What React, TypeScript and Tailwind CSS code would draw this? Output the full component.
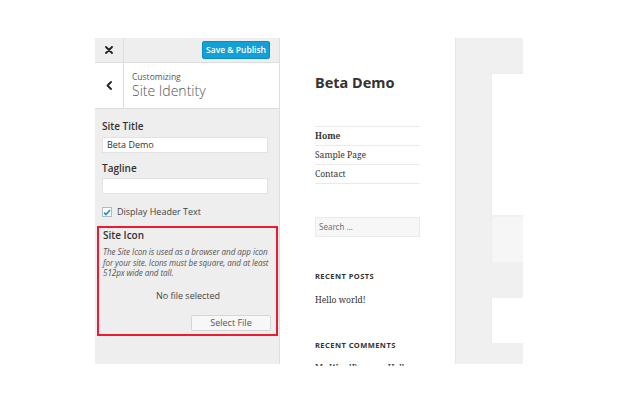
const sans = "font-['Open_Sans','Noto_Sans',sans-serif]";
const serif = "font-['Noto_Serif','DejaVu_Serif',serif]";

const CloseIcon = () => (
  <svg width="8" height="8" viewBox="0 0 8 8">
    <path d="M1 1 L7 7 M7 1 L1 7" stroke="#222" strokeWidth="1.8" strokeLinecap="round" />
  </svg>
);

const BackIcon = () => (
  <svg width="6" height="9" viewBox="0 0 6 9">
    <path d="M5 1 L1.5 4.5 L5 8" stroke="#222" strokeWidth="1.8" fill="none" strokeLinecap="round" strokeLinejoin="round" />
  </svg>
);

const Customizer = () => (
  <div className={`w-[185px] h-[326px] shrink-0 bg-[#eeeeee] border-r border-[#dedede] flex flex-col ${sans} text-[#444]`}>
    <div className="h-[25px] shrink-0 flex border-b border-[#dddddd]">
      <div className="w-[29px] border-r border-[#dddddd] flex items-center justify-center">
        <CloseIcon />
      </div>
      <div className="flex-1 flex items-center justify-end pr-[9px]">
        <button className="w-[68px] h-[18px] rounded-[2px] bg-[#13a0d8] border border-[#0a8cc4] text-white text-[8.5px] font-semibold leading-none">
          Save &amp; Publish
        </button>
      </div>
    </div>
    <div className="h-[46px] shrink-0 flex bg-white border-b border-[#dddddd]">
      <div className="w-[29px] border-r border-[#dddddd] flex items-center justify-center">
        <BackIcon />
      </div>
      <div className="flex flex-col justify-center pl-[8px] pb-[1px] text-[#555]">
        <span className="text-[8.5px] leading-[11px]">Customizing</span>
        <span className="text-[14px] leading-[18px] font-light">Site Identity</span>
      </div>
    </div>
    <div className="pl-[7px] pt-[11px] flex flex-col">
      <label className="text-[10px] leading-[13px] font-semibold text-[#333]">Site Title</label>
      <div className="mt-[4px] w-[166px] h-[16px] bg-white border border-[#e2e2e2] px-[4px] flex items-center text-[9px] text-[#333]">
        Beta Demo
      </div>
      <label className="mt-[9px] text-[10px] leading-[13px] font-semibold text-[#333]">Tagline</label>
      <div className="mt-[3px] w-[166px] h-[16px] bg-white border border-[#e2e2e2]" />
      <div className="mt-[12px] flex items-center gap-[5px]">
        <div className="w-[10px] h-[10px] bg-white border border-[#b4b9be] flex items-center justify-center">
          <svg width="8" height="7" viewBox="0 0 8 7">
            <path d="M1 3.6 L3 5.6 L7 1" stroke="#1e8cbe" strokeWidth="1.6" fill="none" />
          </svg>
        </div>
        <span className="text-[9px] leading-[12px] text-[#444]">Display Header Text</span>
      </div>
      <div className="mt-[8px] -ml-[5px] w-[181px] h-[110px] border-2 border-[#ea1c33] pl-[4px] pr-[3px] flex flex-col">
        <span className="mt-[1px] text-[10px] leading-[13px] font-semibold text-[#333]">Site Icon</span>
        <p className="mt-[5px] text-[8.1px] leading-[10.5px] italic text-[#555] tracking-[-0.01em]">
          The Site Icon is used as a browser and app icon for your site. Icons must be square, and at least 512px wide and tall.
        </p>
        <span className="mt-[10px] text-center text-[9px] leading-[13px] text-[#444]">No file selected</span>
        <div className="mt-[13px] flex justify-end pr-[2px]">
          <button className="w-[80px] h-[16px] bg-[#f7f7f7] border border-[#d6d6d6] rounded-[2px] text-[9px] text-[#555] leading-none">
            Select File
          </button>
        </div>
      </div>
    </div>
  </div>
);

const NavItem = ({ label, bold }: { label: string; bold?: boolean }) => (
  <div className={`h-[19px] border-b border-[#eaeaea] flex items-center text-[8.5px] text-[#333] ${bold ? "font-bold" : ""}`}>
    {label}
  </div>
);

const Preview = () => (
  <div className="w-[175px] h-[328px] shrink-0 bg-white overflow-hidden pl-[35px] pr-[35px] flex flex-col">
    <h1 className="mt-[35px] shrink-0 font-['Noto_Sans','Open_Sans',sans-serif] font-bold text-[14.5px] leading-[18px] text-[#333]">Beta Demo</h1>
    <nav className={`mt-[35px] shrink-0 border-t border-[#eaeaea] ${serif}`}>
      <NavItem label="Home" bold />
      <NavItem label="Sample Page" />
      <NavItem label="Contact" />
    </nav>
    <div className="mt-[33px] shrink-0 h-[20px] bg-[#f7f7f7] border border-[#eaeaea] flex items-center px-[3px] font-['Noto_Sans',sans-serif] text-[8px] text-[#707070]">
      Search …
    </div>
    <h2 className="mt-[34px] shrink-0 font-['Noto_Sans',sans-serif] font-bold text-[7.5px] leading-[10px] tracking-[0.06em] text-[#333]">RECENT POSTS</h2>
    <span className={`mt-[13px] shrink-0 ${serif} text-[8.5px] leading-[12px] text-[#333]`}>Hello world!</span>
    <h2 className="mt-[34px] shrink-0 font-['Noto_Sans',sans-serif] font-bold text-[7.5px] leading-[10px] tracking-[0.06em] text-[#333]">RECENT COMMENTS</h2>
    <span className={`mt-[12px] shrink-0 ${serif} text-[8.5px] leading-[12px] text-[#333]`}>Mr WordPress on Hello world!</span>
  </div>
);

const SidePanel = () => (
  <div className="w-[68px] h-[326px] shrink-0 bg-[#f0f0f0] border-l border-[#e6e6e6] pl-[35px] flex flex-col">
    <div className="mt-[35px] shrink-0 h-[142px] bg-white border-l border-t border-[#ebebeb]" />
    <div className="mt-[2px] shrink-0 h-[45px] bg-[#f6f6f6] border-l border-[#ececec]" />
    <div className="mt-[36px] shrink-0 h-[45px] bg-white border-l border-[#ebebeb]" />
  </div>
);

export default function App() {
  return (
    <div className="w-[629px] h-[399px] bg-white pt-[38px] pl-[95px] flex items-start overflow-hidden">
      <Customizer />
      <Preview />
      <SidePanel />
    </div>
  );
}
